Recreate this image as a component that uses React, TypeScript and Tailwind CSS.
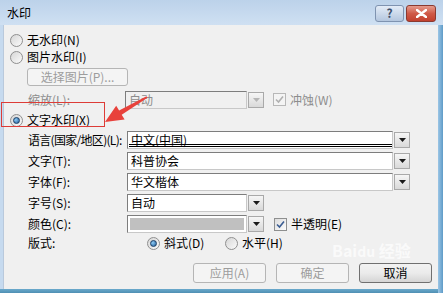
import React from 'react';

const font = "font-['SimSun','Noto_Sans_CJK_SC',sans-serif]";

function Radio({ checked }: { checked?: boolean }) {
  return (
    <span className="flex h-[13px] w-[13px] shrink-0 items-center justify-center rounded-full border border-[#8f8f8f] bg-gradient-to-br from-[#d6d6d6] to-[#fbfbfb]">
      {checked && (
        <span className="h-[7px] w-[7px] rounded-full border border-[#1c3f66] bg-[radial-gradient(circle_at_35%_35%,#8ecbf5,#1f5c98)]" />
      )}
    </span>
  );
}

function Check({ disabled }: { disabled?: boolean }) {
  return (
    <span
      className={`flex h-[13px] w-[13px] shrink-0 items-center justify-center border ${
        disabled ? 'border-[#b8b8b8] bg-[#f4f4f4]' : 'border-[#8e8f8f] bg-gradient-to-br from-[#dcdcdc] to-[#fcfcfc]'
      }`}
    >
      <svg width="9" height="9" viewBox="0 0 9 9">
        <path
          d="M1 4.5 L3.5 7 L8 1.5"
          fill="none"
          stroke={disabled ? '#b0b0b0' : '#3b5d92'}
          strokeWidth="1.6"
        />
      </svg>
    </span>
  );
}

function DropBtn({ disabled }: { disabled?: boolean }) {
  return (
    <span className="ml-px flex h-[16px] w-[16px] shrink-0 items-center justify-center border border-[#a9a9a9] bg-gradient-to-b from-[#f6f6f6] to-[#d9d9d9]">
      <svg width="7" height="4" viewBox="0 0 7 4">
        <path d="M0 0 H7 L3.5 4 Z" fill={disabled ? '#b5b5b5' : '#1a1a1a'} />
      </svg>
    </span>
  );
}

function Combo({
  value,
  width,
  disabled,
  swatch,
  underline,
}: {
  value?: string;
  width: string;
  disabled?: boolean;
  swatch?: boolean;
  underline?: boolean;
}) {
  return (
    <div className={`flex h-[18px] items-center ${width}`}>
      <div
        className={`relative flex h-[18px] flex-1 items-center border border-t-[#7d7d7d] border-l-[#7d7d7d] border-b-[#c8c8c8] border-r-[#c8c8c8] ${
          disabled ? 'bg-[#f0f0f0]' : 'bg-white'
        }`}
      >
        {swatch ? (
          <span className="mx-[2px] h-[12px] flex-1 bg-[#c0c0c0]" />
        ) : (
          <span className={`pl-[3px] text-[12px] leading-none ${disabled ? 'text-[#8d8d8d]' : 'text-black'}`}>
            {value}
          </span>
        )}
        {underline && (
          <span className="absolute bottom-[1px] left-[1px] right-0 h-[3px] border-y border-black" />
        )}
      </div>
      <DropBtn disabled={disabled} />
    </div>
  );
}

function Button({ label, disabled }: { label: string; disabled?: boolean }) {
  return (
    <div
      className={`flex h-[20px] w-[73px] items-center justify-center rounded-[3px] border text-[12px] leading-none ${
        disabled
          ? 'border-[#b5b5b5] bg-[#f4f4f4] text-[#9d9d9d]'
          : 'border-[#707070] bg-gradient-to-b from-[#f2f2f2] via-[#ebebeb] to-[#d5d5d5] text-black'
      }`}
    >
      {label}
    </div>
  );
}

function LabelRow({ label, children, tight }: { label: string; children: React.ReactNode; tight?: boolean }) {
  return (
    <div className="mt-[3px] flex h-[18px] items-center">
      <span
        className={`w-[123px] shrink-0 whitespace-nowrap pl-[24px] text-[12px] leading-none text-black ${
          tight ? 'tracking-[-0.7px]' : ''
        }`}
      >
        {label}
      </span>
      {children}
    </div>
  );
}

export default function App() {
  return (
    <div className={`relative h-[293px] w-[443px] overflow-hidden bg-[#c6daef] ${font}`}>
      {/* title bar */}
      <div className="flex h-[25px] items-center justify-between bg-gradient-to-b from-[#bcd2ea] to-[#cfe0f2] pl-[7px] pr-[7px]">
        <span className="text-[12px] leading-none text-black">水印</span>
        <div className="flex items-center gap-[2px] pt-[1px]">
          <div className="flex h-[17px] w-[29px] items-center justify-center rounded-[3px] border border-[#7f93b0] bg-gradient-to-b from-[#e3ecf7] to-[#b4c6de] text-[12px] font-bold leading-none text-[#3c4e6a]">
            ?
          </div>
          <div className="flex h-[17px] w-[30px] items-center justify-center rounded-[3px] border border-[#8a3a30] bg-gradient-to-b from-[#e59b8d] via-[#cf5a48] to-[#c2402e]">
            <svg width="11" height="9" viewBox="0 0 11 9">
              <path d="M1 1 L10 8 M10 1 L1 8" stroke="#fff" strokeWidth="2.4" strokeLinecap="round" />
            </svg>
          </div>
        </div>
      </div>

      {/* client area */}
      <div className="ml-[3px] h-[264px] w-[435px] border-l border-[#b9c9dc] bg-[#f0f0f0] pt-[7px]">
        <div className="flex h-[16px] items-center gap-[4px] pl-[6px] text-[12px] leading-none">
          <Radio />
          <span>无水印(N)</span>
        </div>
        <div className="mt-[1px] flex h-[16px] items-center gap-[4px] pl-[6px] text-[12px] leading-none">
          <Radio />
          <span>图片水印(I)</span>
        </div>
        <div className="ml-[23px] mt-[3px] flex h-[18px] w-[101px] items-center justify-center rounded-[3px] border border-[#b5b5b5] bg-[#f4f4f4] text-[12px] leading-none text-[#9d9d9d]">
          选择图片(P)...
        </div>
        <div className="mt-[4px] flex h-[19px] items-center">
          <span className="w-[121px] shrink-0 pl-[24px] text-[12px] leading-none text-[#8d8d8d]">缩放(L):</span>
          <Combo value="自动" width="w-[139px]" disabled />
          <div className="ml-[9px] flex items-center gap-[4px] text-[12px] leading-none text-[#8d8d8d]">
            <Check disabled />
            <span>冲蚀(W)</span>
          </div>
        </div>
        <div className="mt-[3px] flex h-[16px] items-center gap-[4px] pl-[6px] text-[12px] leading-none">
          <Radio checked />
          <span>文字水印(X)</span>
        </div>

        <LabelRow label="语言(国家/地区)(L):" tight>
          <Combo value="中文(中国)" width="w-[283px]" underline />
        </LabelRow>
        <LabelRow label="文字(T):">
          <Combo value="科普协会" width="w-[283px]" />
        </LabelRow>
        <LabelRow label="字体(F):">
          <Combo value="华文楷体" width="w-[283px]" />
        </LabelRow>
        <LabelRow label="字号(S):">
          <Combo value="自动" width="w-[137px]" />
        </LabelRow>
        <LabelRow label="颜色(C):">
          <Combo width="w-[137px]" swatch />
          <div className="ml-[10px] flex items-center gap-[4px] text-[12px] leading-none">
            <Check />
            <span>半透明(E)</span>
          </div>
        </LabelRow>
        <div className="mt-[2px] flex h-[16px] items-center text-[12px] leading-none">
          <span className="w-[143px] shrink-0 pl-[24px]">版式:</span>
          <Radio checked />
          <span className="ml-[4px] w-[61px]">斜式(D)</span>
          <Radio />
          <span className="ml-[4px]">水平(H)</span>
        </div>

        <div className="relative mt-[12px] flex justify-end gap-[10px] pr-[6px]">
          <span className="pointer-events-none absolute left-[328px] top-[-21px] text-[16px] font-bold leading-none text-white/70">
            Bai<span className="text-[14px]">du</span> 经验
          </span>
          <Button label="应用(A)" disabled />
          <Button label="确定" disabled />
          <Button label="取消" />
        </div>
      </div>

      {/* bottom frame */}
      <div className="h-[4px] bg-gradient-to-b from-[#6aa9cc] to-[#4f8fb3]" />

      {/* right frame */}
      <div className="absolute right-0 top-[25px] h-[268px] w-[5px] bg-gradient-to-r from-[#9cc6e6] to-[#5e9bc7]" />

      {/* annotation */}
      <div className="pointer-events-none absolute left-[1px] top-[102px] h-[25px] w-[104px] border-[1.5px] border-[#dd3c37]" />
      <svg className="pointer-events-none absolute left-0 top-0" width="443" height="293" viewBox="0 0 443 293">
        <polygon
          points="105,122 124.6,119.4 121.7,114.7 147.5,97.8 146.5,96.2 119.1,110.5 116.2,105.8"
          fill="#e8423c"
        />
      </svg>
    </div>
  );
}
